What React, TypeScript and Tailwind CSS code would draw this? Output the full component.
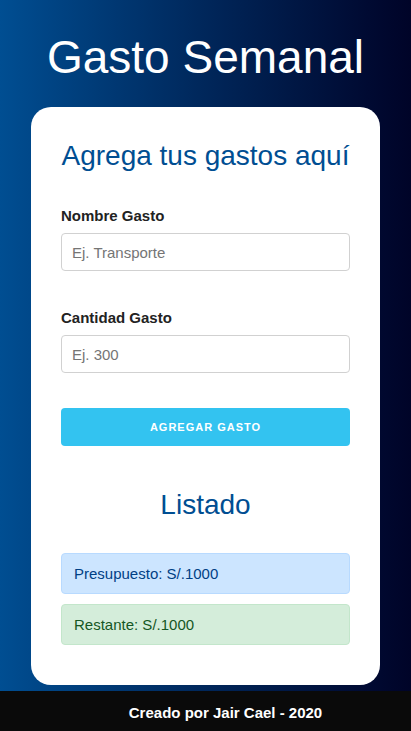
import React, { useState } from 'react';

const FONT = "font-['Liberation_Sans',Arial,sans-serif]";

const App: React.FC = () => {
  const [nombre, setNombre] = useState('');
  const [cantidad, setCantidad] = useState('');
  const presupuesto = 1000;
  const restante = 1000;

  return (
    <div className={`min-h-screen flex flex-col bg-gradient-to-r from-[#004e92] to-[#000428] ${FONT}`}>
      <div className="pt-[34px] px-[31px] pb-[6px]">
        <h1 className="text-center text-white text-[46px] leading-none mb-[27px]">Gasto Semanal</h1>

        <div className="bg-white rounded-[20px] px-[30px] pt-[35px] pb-[40px]">
          <h2 className="text-center text-[#004e92] text-[28px] leading-none mb-[34px]">Agrega tus gastos aquí</h2>

          <form onSubmit={(e) => e.preventDefault()}>
            <label className="block text-[15px] leading-[24px] font-bold text-[#222] mb-[5px]">Nombre Gasto</label>
            <input
              type="text"
              value={nombre}
              onChange={(e) => setNombre(e.target.value)}
              placeholder="Ej. Transporte"
              className="block w-full h-[38px] px-[10px] border border-[#d1d1d1] rounded-[4px] text-[15px] text-[#222] placeholder:text-[#757575] outline-none mb-[35px]"
            />

            <label className="block text-[15px] leading-[24px] font-bold text-[#222] mb-[5px]">Cantidad Gasto</label>
            <input
              type="number"
              value={cantidad}
              onChange={(e) => setCantidad(e.target.value)}
              placeholder="Ej. 300"
              className="block w-full h-[38px] px-[10px] border border-[#d1d1d1] rounded-[4px] text-[15px] text-[#222] placeholder:text-[#757575] outline-none mb-[35px]"
            />

            <button
              type="submit"
              className="block w-full h-[38px] bg-[#33c3f0] rounded-[4px] text-white text-[11px] font-bold uppercase tracking-[1px]"
            >
              Agregar Gasto
            </button>
          </form>

          <h2 className="text-center text-[#004e92] text-[28px] leading-none mt-[45px] mb-[34px]">Listado</h2>

          <div className="px-[12px] py-[10px] leading-[19px] text-[15px] border border-[#b8daff] bg-[#cce5ff] text-[#004085] rounded-[4px] mb-[10px]">
            Presupuesto: S/.{presupuesto}
          </div>
          <div className="px-[12px] py-[10px] leading-[19px] text-[15px] border border-[#c3e6cb] bg-[#d4edda] text-[#155724] rounded-[4px]">
            Restante: S/.{restante}
          </div>
        </div>
      </div>

      <footer className="mt-auto h-[40px] bg-[#0a0a0a] pt-[14px] pl-[40px] text-center text-white text-[15px] leading-[16px] font-bold">
        Creado por Jair Cael - 2020
      </footer>
    </div>
  );
};

export default App;
